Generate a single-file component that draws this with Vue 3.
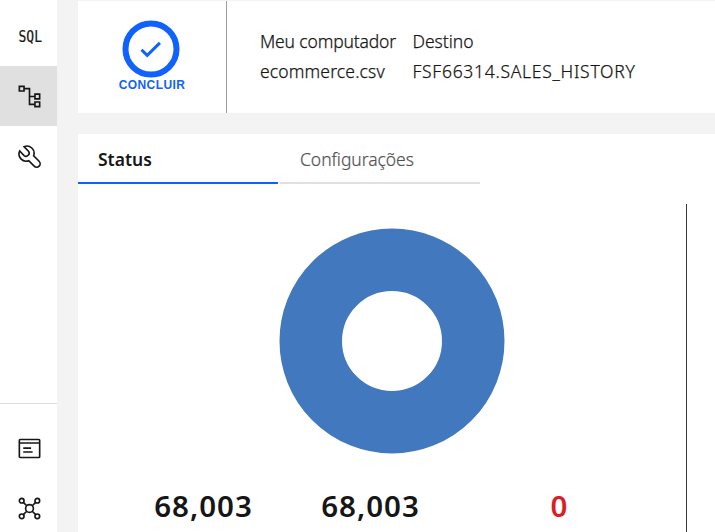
<script setup>
import { ref } from 'vue'

const tabs = [
  { id: 'status', label: 'Status' },
  { id: 'config', label: 'Configurações' }
]
const active = ref('status')
</script>

<template>
  <div class="page">
    <nav class="rail">
      <a class="item first">
        <svg width="32" height="24" viewBox="0 0 32 24">
          <text class="sql" x="4.5" y="17" textLength="23.5" lengthAdjust="spacingAndGlyphs">SQL</text>
        </svg>
      </a>
      <a class="item current">
        <svg width="25" height="25" viewBox="0 0 32 32" class="line">
          <path d="M3 3h6v6H3zM23 13h6v6h-6zM23 23h6v6h-6zM9 6h7v20h7M16 16h7" />
        </svg>
      </a>
      <a class="item">
        <svg width="25" height="25" viewBox="0 0 32 32" class="line">
          <path d="M9 3.4 14.7 9.2a4 4 0 0 1-5.6 5.600L3.400 9A9.200 9.200 0 0 0 15 21.400L22 28.400a4.400 4.400 0 0 0 6.300-6.300L21.300 15A9.200 9.200 0 0 0 9 3.400z" />
        </svg>
      </a>
      <div class="spacer"></div>
      <div class="bottom">
        <a class="item">
          <svg width="25" height="25" viewBox="0 0 32 32" class="line">
            <rect x="3" y="4.500" width="26" height="23" rx="1" />
            <path d="M3 9h26M8 15.500h10M8 20.500h12" />
          </svg>
        </a>
        <a class="item">
          <svg width="25" height="25" viewBox="0 0 32 32" class="line">
            <circle cx="16" cy="16" r="5" />
            <circle cx="6" cy="6" r="3" />
            <circle cx="26" cy="6" r="3" />
            <circle cx="6" cy="26" r="3" />
            <circle cx="26" cy="26" r="3" />
            <path d="M8.100 8.100l4.400 4.400M23.900 8.100l-4.400 4.400M8.100 23.900l4.400-4.400M23.900 23.900l-4.400-4.400" />
          </svg>
        </a>
      </div>
    </nav>
    <main class="content">
      <section class="summary">
        <div class="state">
          <svg width="58" height="58" viewBox="0 0 58 58">
            <circle cx="29" cy="29" r="25.500" />
            <path d="M19.500 29.700l5.700 5.700 12.700-12.500" />
          </svg>
          <span class="done">CONCLUIR</span>
        </div>
        <dl class="route">
          <dt class="src">Meu computador</dt>
          <dt class="dst">Destino</dt>
          <dd class="file">ecommerce.csv</dd>
          <dd class="table">FSF66314.SALES_HISTORY</dd>
        </dl>
      </section>
      <section class="details">
        <div class="tabs">
          <button v-for="t in tabs" :key="t.id" :class="['tab', { on: active === t.id }]" @click="active = t.id">
            <span>{{ t.label }}</span>
          </button>
        </div>
        <div class="panel">
          <div class="chart">
            <svg class="donut" width="228" height="228" viewBox="0 0 228 228">
              <circle cx="114" cy="114" r="81.250" />
            </svg>
            <div class="totals">
              <strong>68,003</strong>
              <strong>68,003</strong>
              <strong class="errors">0</strong>
            </div>
          </div>
          <div class="side"></div>
        </div>
      </section>
    </main>
  </div>
</template>

<style>
body {
  margin: 0;
  overflow: hidden;
}
</style>

<style scoped>
* {
  box-sizing: border-box;
}
.page {
  display: flex;
  width: 100%;
  height: 532px;
  overflow: hidden;
  background: #f3f3f3;
  color: #161616;
  font-family: "Noto Sans", sans-serif;
}
.rail {
  display: flex;
  flex-direction: column;
  flex: 0 0 57px;
  background: #fff;
}
.spacer {
  flex: 1;
}
.item {
  display: flex;
  align-items: center;
  justify-content: center;
  flex: none;
  height: 60px;
  padding: 1px 0 0 2px;
}
.first {
  margin-top: 6px;
}
.current {
  background: #e0e0e0;
}
.bottom {
  height: 129px;
  padding-top: 14px;
  border-top: 1px solid #dcdcdc;
}
.line {
  fill: none;
  stroke: #161616;
  stroke-width: 2.1;
}
.sql {
  fill: #161616;
  stroke: #161616;
  stroke-width: 0.2;
  font: 15px "DejaVu Sans Mono", monospace;
}
.content {
  display: flex;
  flex-direction: column;
  flex: 1;
  gap: 21px;
  padding: 1px 0 0 21px;
}
.summary {
  display: flex;
  flex: 0 0 112px;
  background: #fff;
}
.state {
  display: flex;
  flex-direction: column;
  align-items: center;
  width: 149px;
  padding: 19px 3px 0 0;
  border-right: 1px solid #a0a0a0;
}
.state svg {
  display: block;
  fill: none;
  stroke: #0f62fe;
  stroke-width: 6;
}
.state path {
  stroke-width: 3;
}
.done {
  padding-left: 3px;
  color: #0f62fe;
  font: bold 12px/14px "Liberation Sans", sans-serif;
  letter-spacing: 0.4px;
  white-space: nowrap;
}
.route {
  display: grid;
  grid-template-columns: 152.5px auto;
  grid-auto-rows: 30px;
  margin: 0;
  padding: 25px 0 0 33px;
  font-size: 17.5px;
  font-weight: 300;
  line-height: 30px;
  white-space: nowrap;
  -webkit-text-stroke: 0.25px currentColor;
}
.route dd {
  margin: 0;
}
.src {
  letter-spacing: -0.15px;
}
.dst {
  letter-spacing: 0;
}
.file {
  letter-spacing: 0.15px;
}
.table {
  letter-spacing: 0.72px;
}
.details {
  display: flex;
  flex-direction: column;
  flex: 1;
  background: #fff;
}
.tabs {
  display: flex;
  gap: 2px;
  height: 50px;
}
.tab {
  width: 200px;
  padding: 2px 20px 0;
  border: 0;
  border-bottom: 2px solid #e0e0e0;
  background: none;
  color: #525252;
  font-family: inherit;
  font-size: 17.5px;
  font-weight: 300;
  letter-spacing: -0.05px;
  text-align: left;
  -webkit-text-stroke: 0.2px currentColor;
}
.on {
  border-color: #0f62fe;
  color: #161616;
  font-weight: 600;
  letter-spacing: 0;
  -webkit-text-stroke: 0;
}
.panel {
  display: flex;
  flex: 1;
  padding-top: 20px;
}
.chart {
  width: 609px;
  border-right: 1px solid #393939;
}
.donut {
  display: block;
  margin: 23px 0 0 200px;
  fill: none;
  stroke: #4178be;
  stroke-width: 62.500;
}
.totals {
  display: grid;
  grid-template-columns: 167px 167px 167px;
  padding: 31px 0 0 42px;
  font-size: 29.5px;
  line-height: 40px;
  letter-spacing: 1px;
  text-align: center;
}
.totals strong {
  font-weight: 600;
}
.totals .errors {
  padding-left: 44px;
  color: #da1e28;
}
</style>
